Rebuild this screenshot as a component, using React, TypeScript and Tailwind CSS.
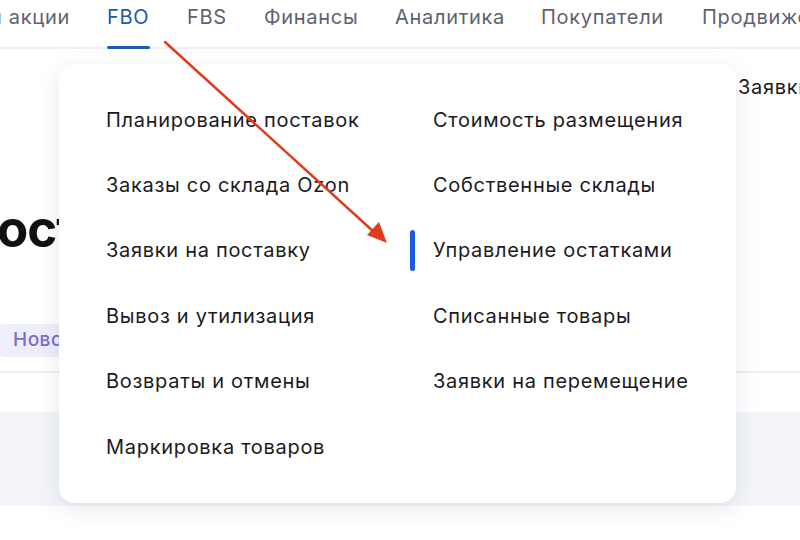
import React from "react";

const navItems = [
  { label: "FBO", w: "w-[43px]", active: true },
  { label: "FBS", w: "w-[40px]" },
  { label: "Финансы", w: "w-[94px]" },
  { label: "Аналитика", w: "w-[109px]" },
  { label: "Покупатели", w: "w-[124px]" },
  { label: "Продвижение", w: "w-[150px]" },
];

const leftCol = [
  "Планирование поставок",
  "Заказы со склада Ozon",
  "Заявки на поставку",
  "Вывоз и утилизация",
  "Возвраты и отмены",
  "Маркировка товаров",
];

const rightCol = [
  "Стоимость размещения",
  "Собственные склады",
  "Управление остатками",
  "Списанные товары",
  "Заявки на перемещение",
];

export default function App() {
  return (
    <div
      className="relative w-[800px] h-[540px] overflow-hidden bg-white"
      style={{ fontFamily: "Inter, 'Noto Sans', sans-serif" }}
    >
      {/* top navigation */}
      <nav className="flex h-[49px] gap-[37px] border-b-2 border-[#eef0f3] text-[20px] tracking-[0.7px] text-[#5d6270] whitespace-nowrap">
        <div className="w-[70px] shrink-0 h-full flex justify-end overflow-hidden">
          <span className="pt-[6px] leading-[22px]">Цены и акции</span>
        </div>
        {navItems.map((it) => (
          <div
            key={it.label}
            className={`relative h-full shrink-0 ${it.w} ${it.active ? "text-[#2158b8]" : ""}`}
          >
            <span className="block pt-[6px] leading-[22px]">{it.label}</span>
            {it.active && (
              <span className="absolute left-0 right-0 -bottom-[2px] h-[3px] rounded-full bg-[#2158b8]" />
            )}
          </div>
        ))}
      </nav>

      {/* page body (mostly covered by the dropdown) */}
      <div className="flex flex-col">
        <div className="flex justify-end h-[64px] pt-[26px]">
          <div className="w-[62px] overflow-hidden whitespace-nowrap text-[20px] tracking-[0.7px] leading-[24px] text-[#1b1b1f]">
            Заявки на поставку
          </div>
        </div>
        <div className="h-[148px] pt-[88px] -ml-[3px] whitespace-nowrap">
          <span className="text-[51px] leading-[56px] font-bold tracking-[-1px] text-[#111]">
            остатками
          </span>
        </div>
        <div className="pt-[63px]">
          <div className="flex">
            <span className="-ml-[10px] pl-[23px] pr-4 h-[33px] flex items-center rounded-full bg-[#efeefb] text-[19px] tracking-[0.5px] font-medium text-[#7a6fcc]">
              Новое
            </span>
          </div>
        </div>
        <div className="h-[41px] border-t-2 border-[#eef0f3] mt-[14px]" />
        <div className="h-[94px] bg-[#f3f5f9]" />
      </div>

      {/* dropdown menu */}
      <div className="absolute left-[59px] top-[64px] w-[677px] h-[439px] rounded-[16px] bg-white shadow-[0_6px_24px_rgba(20,40,80,0.10)]">
        <div className="grid grid-cols-[327px_1fr] pt-[23px] pl-[47px] text-[20px] tracking-[0.7px] text-[#1b1b1f]">
          <div className="flex flex-col">
            {leftCol.map((t) => (
              <div key={t} className="h-[65.4px] flex items-center whitespace-nowrap">
                {t}
              </div>
            ))}
          </div>
          <div className="flex flex-col">
            {rightCol.map((t) => (
              <div key={t} className="relative h-[65.4px] flex items-center whitespace-nowrap">
                {t === "Управление остатками" && (
                  <span className="absolute -left-[23px] top-[12px] w-[5px] h-[41px] rounded-full bg-[#1a5ce0]" />
                )}
                {t}
              </div>
            ))}
          </div>
        </div>
      </div>

      {/* annotation arrow */}
      <svg
        className="absolute left-0 top-0 pointer-events-none"
        width="800"
        height="540"
        viewBox="0 0 800 540"
      >
        <line x1="165" y1="42" x2="374" y2="232" stroke="#e23b1c" strokeWidth="2.5" strokeLinecap="round" />
        <polygon points="387,243 367,235 379,222" fill="#e23b1c" />
      </svg>
    </div>
  );
}
